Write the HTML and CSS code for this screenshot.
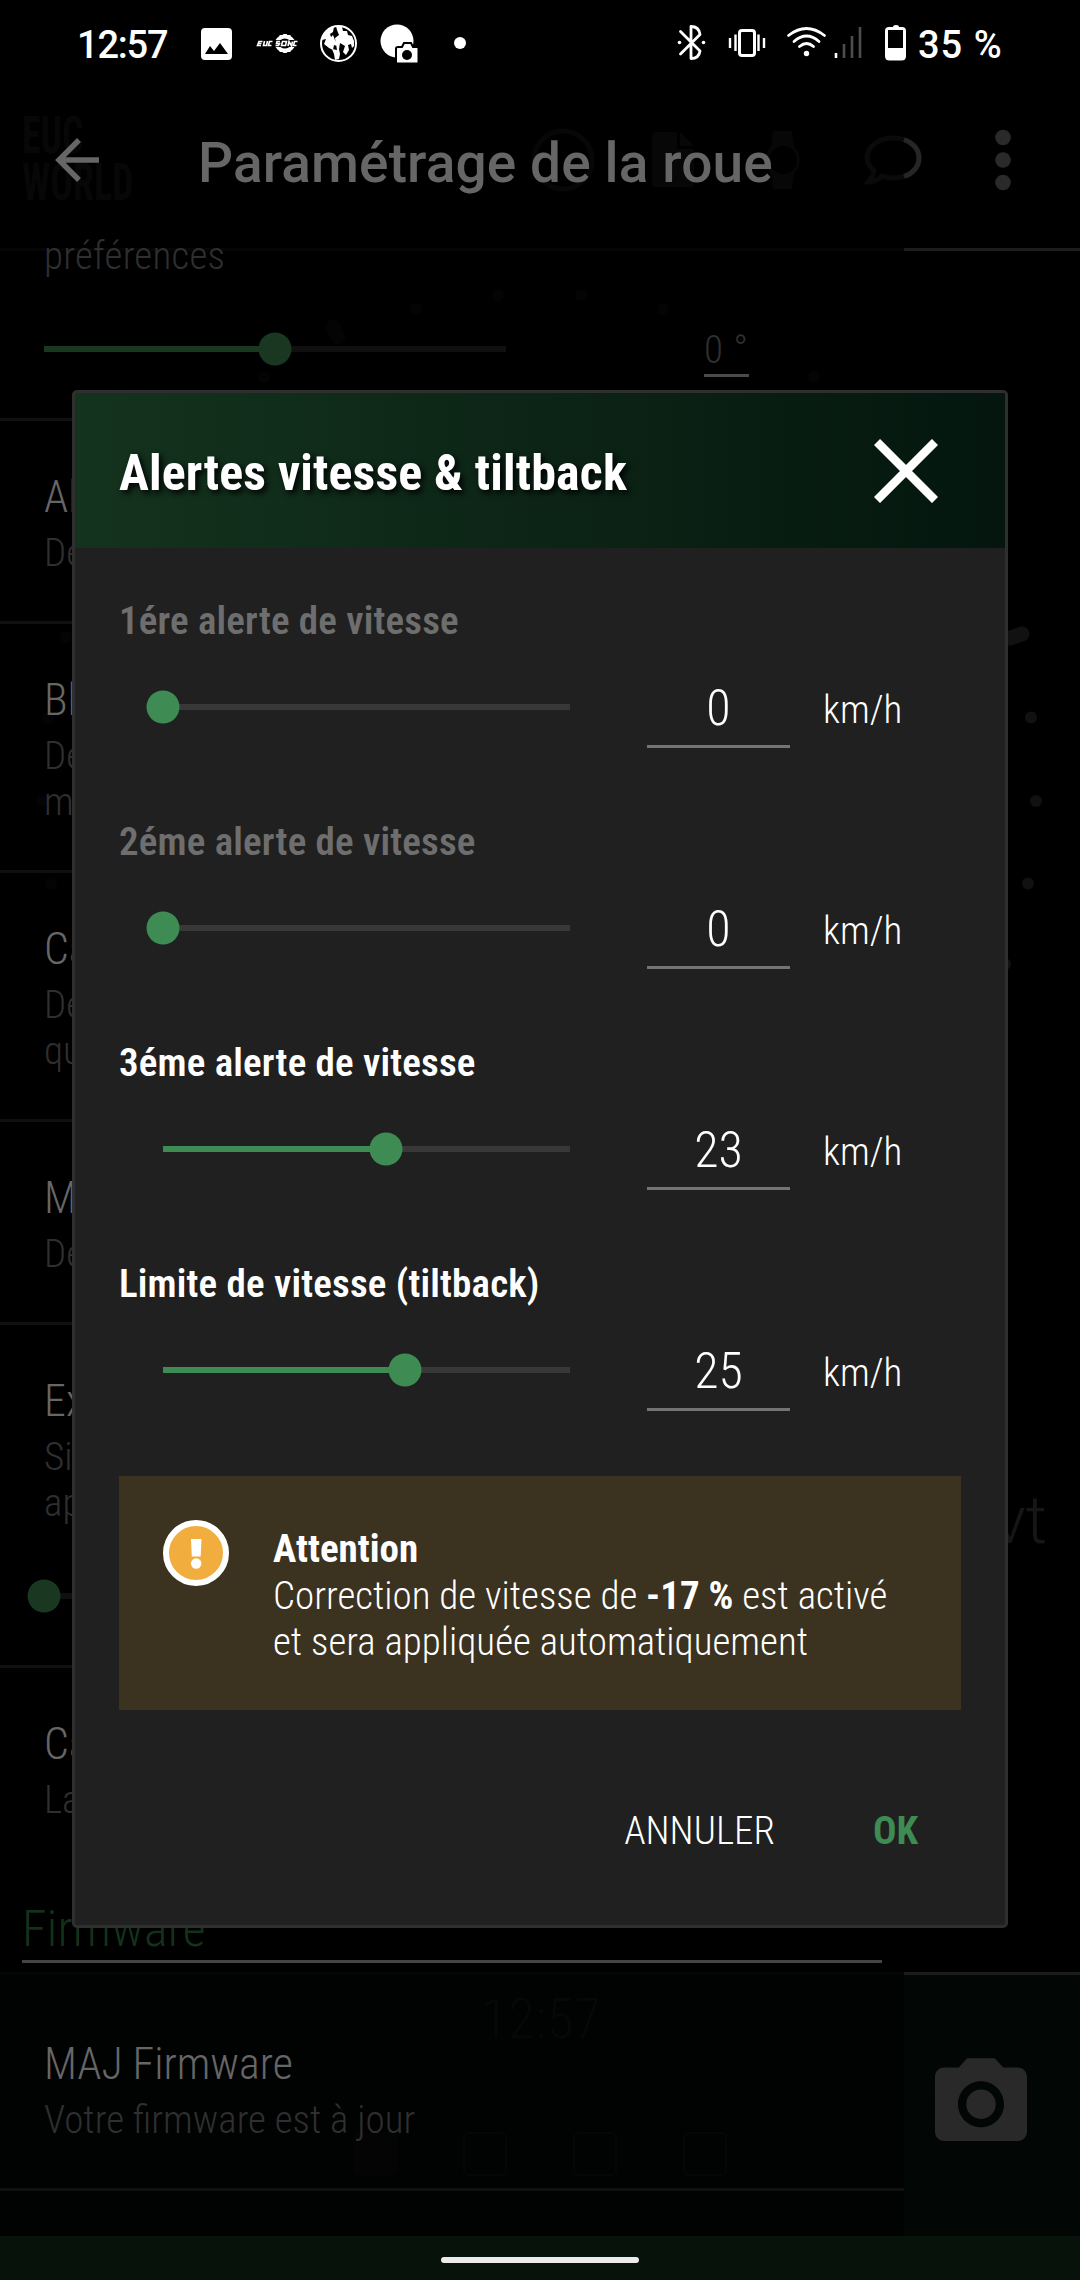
FILE: index.html
```html
<!DOCTYPE html>
<html lang="fr">
<head>
<meta charset="utf-8">
<title>Paramétrage de la roue</title>
<link rel="stylesheet" href="styles.css">
</head>
<body>
<div class="screen">

  <!-- dashboard, dimmed behind the drawer -->
  <div class="dashboard">
    <svg class="dash-art" viewBox="0 0 1080 2280">
      <g fill="none" stroke="#070707" stroke-width="5">
        <circle cx="563" cy="160" r="29"/>
      </g>
      <g fill="#070707">
        <path d="M655 132h22v17h17v35q0 3-3 3h-36q-3 0-3-3v-49q0-3 3-3zM680 132l14 14h-14z"/>
        <path fill-rule="evenodd" d="M773 131h19l2 15a20 20 0 0 1 0 28l-2 15h-19l-2-15a20 20 0 0 1 0-28zM783 146a14 14 0 1 0 .01 0z"/>
      </g>
      <path d="M893 138c15 0 26 9 26 20s-11 20-26 20c-4 0-8-.7-11-2-4 4-8 6-14 6 4-5 6-7 6-11-4-4-7-8-7-13 0-11 11-20 26-20z" fill="none" stroke="#0a0a0a" stroke-width="5"/>
      <path d="M904 139.500c9 3 15 10 15 18.500s-6 15.500-15 18.500" fill="none" stroke="#262626" stroke-width="5"/>
      <g fill="#2a2a2a"><circle cx="1003" cy="137.500" r="7.800"/><circle cx="1003" cy="160" r="7.800"/><circle cx="1003" cy="182.500" r="7.800"/></g>
      <g fill="#040404">
        <circle cx="264" cy="377" r="6"/><circle cx="416" cy="309" r="6"/><circle cx="498" cy="295" r="6"/><circle cx="581" cy="295" r="6"/><circle cx="663" cy="309" r="6"/><circle cx="814" cy="377" r="6"/>
        <circle cx="66" cy="637" r="6"/><circle cx="48" cy="718" r="6"/><circle cx="42" cy="801" r="6"/><circle cx="51" cy="884" r="6"/>
      </g>
      <path d="M333 327l5 10" stroke="#040404" stroke-width="15" stroke-linecap="round"/>
      <path d="M1010 638l12-4" stroke="#111" stroke-width="15" stroke-linecap="round"/>
      <g fill="#111"><circle cx="1031" cy="717.500" r="6"/><circle cx="1036" cy="801" r="6"/><circle cx="1028" cy="883.500" r="6"/><circle cx="1005" cy="964" r="6"/></g>
      <rect x="0" y="248" width="904" height="3" fill="#060606"/>
      <rect x="904" y="248" width="176" height="3" fill="#1c1c1c"/>
      <rect x="0" y="1972" width="904" height="264" fill="#010202"/>
      <rect x="0" y="1972" width="904" height="3" fill="#050505"/>
      <rect x="904" y="1972" width="176" height="264" fill="#020706"/>
      <rect x="904" y="1972" width="176" height="3" fill="#1c1c1c"/>
      <rect x="353" y="2132" width="44" height="44" rx="6" fill="#050404"/>
      <g fill="none" stroke="#060606" stroke-width="2"><rect x="464" y="2133" width="42" height="42" rx="5"/><rect x="574" y="2133" width="42" height="42" rx="5"/><rect x="684" y="2133" width="42" height="42" rx="5"/></g>
      <g transform="translate(925.800 2049) scale(4.600)" fill="#292929"><circle cx="12" cy="12" r="3.200"/><path d="M9 2L7.170 4H4c-1.100 0-2 .9-2 2v12c0 1.100.9 2 2 2h16c1.100 0 2-.9 2-2V6c0-1.100-.9-2-2-2h-3.170L15 2H9zm3 15c-2.760 0-5-2.240-5-5s2.240-5 5-5 5 2.240 5 5-2.240 5-5 5z"/></g>
    </svg>
    <div class="dash-logo">EUC<br>WORLD</div>
    <div class="dash-volt">vt</div>
    <div class="dash-clock">12:57</div>
  </div>

  <header class="status">
    <span class="status-time">12:57</span>
    <svg class="status-icons" viewBox="180 0 738 88" width="738" height="88">
      <path fill="#fff" fill-rule="evenodd" d="M205 28h23q4 0 4 4v24q0 4-4 4h-23q-4 0-4-4V32q0-4 4-4zM205 54h23l-8-11-6 8-4-5z"/>
      <path fill="#fff" d="M275.500 40q2-3 4-4v-1h3l1-1h3l1 1h3v1q2 1 4 4h-5q-5-3-9 0zM275.500 47h5q4 3 9 0h5q-2 3-4 4v1h-3l-1 1h-3l-1-1h-3v-1q-2-1-4-4z"/>
      <g fill="none" stroke="#fff" stroke-width="1.600"><path d="M262.500 41.500h-3.500l-1.500 4h3.500M258.500 43.500h3M264.500 41l-1 4.500h3l1-4.500M272.500 41.500h-3l-1 4h3M280 41.500h-3l-.5 2h3l-1 2h-3M282.500 41.500h4l-1 4h-4zM288 46l1-4.500 2.500 4.500 1-4.500M297.500 41.500h-3l-1 4h3"/></g>
      <circle cx="338.500" cy="43.500" r="17.500" fill="none" stroke="#fff" stroke-width="2"/>
      <path fill="#fff" d="M328 29l6-2-1 5-3 2 1 3 2-2 2 5 2 6-3-1-1 5-4-2-5-4 2-5-4 1 1-5zM336 26l6 1 1 4 4 0 1 4 4 1 2 5 0 5-2 2-1-4-3 1 1 5-3 5-3-3 2-6-5-3 -1 6 1 5-1 5-4 1-1-6-2-5 5 1-1-6-1-6 4-3-2-5z"/>
      <circle cx="397" cy="41" r="16.500" fill="#fff"/>
      <path d="M398 47h4l2-4h7l2 4h4q1.500 0 1.500 1.500v13.500q0 1.500-1.500 1.500h-19q-2 0-2-1.500v-13.500q0-1.500 2-1.500z" fill="#fff" stroke="#000" stroke-width="2"/>
      <circle cx="407" cy="55" r="5" fill="#000"/>
      <circle cx="460" cy="43" r="6" fill="#fff"/>
      <path d="M680.500 31.500L700 51q-1 7.500-9 7.500V26.500q8 0 9 8L680.500 54" fill="none" stroke="#fff" stroke-width="2.800" stroke-linejoin="round" stroke-linecap="round"/>
      <circle cx="679.500" cy="42.500" r="1.800" fill="#fff"/><circle cx="703.500" cy="42.500" r="1.800" fill="#fff"/>
      <rect x="739.500" y="30.500" width="15" height="25" rx="2.500" fill="none" stroke="#fff" stroke-width="3"/>
      <path d="M730 38v10M735.500 34.500v16.500M758.500 34.500v16.500M764 38v10" stroke="#fff" stroke-width="2.400"/>
      <g fill="none" stroke="#fff" stroke-width="2.800" stroke-linecap="round"><path d="M788.500 35.500q18-14 36 0M794 41.500q12.500-11 25 0M799.500 46.500q7-6 14 0"/></g>
      <circle cx="806.500" cy="53.500" r="2.700" fill="#fff"/>
      <path d="M836 53v5" stroke="#fff" stroke-width="2.600"/>
      <path d="M844 44v14M852 36v22M860 27v31" stroke="#4d4d4d" stroke-width="2.600"/>
      <path fill="#fff" fill-rule="evenodd" d="M893 27q0-2 3-2t3 2h3q4 0 4 4v25q0 4.500-4.500 4.500h-12q-4.500 0-4.500-4.500V31q0-4 4-4zM888 30v18h15V30z"/>
    </svg>
    <span class="status-battery">35 %</span>
  </header>

  <section class="drawer">
    <div class="toolbar">
      <svg class="back" viewBox="0 0 44 44" width="44" height="44"><path d="M44 22H4M24 2L4 22l20 20" fill="none" stroke="#666" stroke-width="5.500"/></svg>
      <h1 class="toolbar-title">Paramétrage de la roue</h1>
    </div>
    <div class="list">
      <div class="pref pref-first">
        <p class="pref-sub">préférences</p>
        <div class="pref-control">
          <div class="slider slider-dim"><span class="fill" style="width:50%"></span><span class="thumb" style="left:50%"></span></div>
          <span class="pref-value">0 °</span>
        </div>
      </div>
      <div class="pref"><p class="pref-title">Al</p><p class="pref-sub">Dé</p></div>
      <div class="pref"><p class="pref-title">Bl</p><p class="pref-sub">Dé<br>m</p></div>
      <div class="pref"><p class="pref-title">Ca</p><p class="pref-sub">Dé<br>qu</p></div>
      <div class="pref"><p class="pref-title">M</p><p class="pref-sub">Dé</p></div>
      <div class="pref pref-tall">
        <p class="pref-title">Ex</p><p class="pref-sub">Si<br>ap</p>
        <div class="slider slider-dim"><span class="fill" style="width:0%"></span><span class="thumb" style="left:0%"></span></div>
      </div>
      <div class="pref pref-last"><p class="pref-title">Ca</p><p class="pref-sub">La</p></div>
      <h2 class="group">Firmware</h2>
      <div class="pref"><p class="pref-title">MAJ Firmware</p><p class="pref-sub">Votre firmware est à jour</p></div>
    </div>
  </section>

  <div class="navbar"><span class="navpill"></span></div>

  <div class="dialog">
    <div class="dialog-head">
      <h2 class="dialog-title">Alertes vitesse &amp; tiltback</h2>
      <svg viewBox="0 0 64 64" width="64" height="64"><path d="M3 3l58 58M61 3L3 61" stroke="#fff" stroke-width="8.600"/></svg>
    </div>
    <div class="dialog-body">
      <div class="alert-row">
        <p class="label off">1ére alerte de vitesse</p>
        <div class="control"><div class="slider"><span class="fill" style="width:0%"></span><span class="thumb" style="left:0%"></span></div><span class="value">0</span><span class="unit">km/h</span></div>
      </div>
      <div class="alert-row">
        <p class="label off">2éme alerte de vitesse</p>
        <div class="control"><div class="slider"><span class="fill" style="width:0%"></span><span class="thumb" style="left:0%"></span></div><span class="value">0</span><span class="unit">km/h</span></div>
      </div>
      <div class="alert-row">
        <p class="label">3éme alerte de vitesse</p>
        <div class="control"><div class="slider"><span class="fill" style="width:54.800%"></span><span class="thumb" style="left:54.800%"></span></div><span class="value">23</span><span class="unit">km/h</span></div>
      </div>
      <div class="alert-row">
        <p class="label">Limite de vitesse (tiltback)</p>
        <div class="control"><div class="slider"><span class="fill" style="width:59.500%"></span><span class="thumb" style="left:59.500%"></span></div><span class="value">25</span><span class="unit">km/h</span></div>
      </div>
      <div class="warning">
        <svg viewBox="0 0 66 66" width="66" height="66"><circle cx="33" cy="33" r="30" fill="#f2ad3f" stroke="#fff" stroke-width="6"/><path d="M28 19h10.500l-.8 17.500h-8.900z" fill="#fff"/><circle cx="33.200" cy="43.500" r="5.200" fill="#fff"/></svg>
        <p><b>Attention</b><br>Correction de vitesse de <b>-17 %</b> est activé<br>et sera appliquée automatiquement</p>
      </div>
      <div class="actions"><span>ANNULER</span><b>OK</b></div>
    </div>
  </div>
</div>
</body>
</html>
```
FILE: styles.css
```css
* { box-sizing: border-box; }
body { margin: 0; background: #000; }
h1, h2, p { margin: 0; font-weight: inherit; }

.screen {
  position: relative;
  width: 1080px;
  height: 2280px;
  overflow: hidden;
  display: flex;
  flex-direction: column;
  background: #000;
  color: #fff;
  font-family: "Roboto Condensed", Roboto, sans-serif;
  font-stretch: 75%;
  font-weight: 300;
  font-size: 39px;
  white-space: nowrap;
}
svg { display: block; flex: none; }

/* dashboard layer */
.dashboard { position: absolute; inset: 0; }
.dash-art { width: 1080px; height: 2280px; }
.dash-logo {
  position: absolute; left: 22px; top: 112px;
  transform: scaleX(.74); transform-origin: 0 0;
  font-size: 51px; line-height: 47px; font-weight: 700; color: #070707;
}
.dash-volt {
  position: absolute; right: 33px; top: 1483px;
  font-size: 66px; line-height: 76px; font-stretch: 100%; font-family: Roboto, sans-serif; color: #161616;
}
.dash-clock { position: absolute; left: 481px; top: 1986px; font-size: 55px; line-height: 66px; letter-spacing: .4px; color: #070707; }

/* status bar */
.status {
  position: relative;
  display: flex;
  align-items: center;
  height: 88px;
  padding-left: 77px;
  font-family: Roboto, sans-serif;
  font-stretch: 100%;
  font-weight: 500;
  font-size: 38px;
  line-height: 88px;
}
.status-time { width: 103px; padding-top: 2px; letter-spacing: -1.2px; }
.status-battery { padding-top: 2px; letter-spacing: 1px; }

/* drawer */
.drawer { position: relative; flex: 1; display: flex; flex-direction: column; width: 904px; }
.toolbar { display: flex; align-items: center; height: 145px; padding: 0 0 1px 55px; }
.toolbar-title {
  margin-left: 99px; padding-top: 6px;
  font-family: Roboto, sans-serif; font-stretch: 100%;
  font-weight: 500; font-size: 55px; line-height: 64px; letter-spacing: .12px; color: #666;
}
.pref { padding: 49px 22px 45px 44px; border-bottom: 3px solid #101010; }
.pref-first { padding: 0 0 0 44px; }
.pref-title { font-size: 44px; line-height: 54px; color: #666; }
.pref-sub { margin-top: 6px; line-height: 46px; color: #2f2f2f; }
.pref-first .pref-sub { margin-top: 0; letter-spacing: .25px; }
.pref-control { display: flex; align-items: center; height: 139px; }
.pref-control .slider { width: 462px; }
.pref-value {
  margin-left: 198px; padding: 3px 0 0; width: 45px; height: 57px;
  border-bottom: 3px solid #4a4a4a; line-height: 54px; letter-spacing: .8px; color: #2f2f2f;
}
.pref-tall .slider { margin-top: 67px; margin-bottom: 21px; width: 620px; }
.pref-last { border-bottom: 0; }
.group {
  margin: 31px 22px 25px; padding-bottom: 1px;
  border-bottom: 3px solid #444;
  font-size: 50px; line-height: 60px; letter-spacing: .2px; color: #12321c;
}

/* sliders */
.slider { position: relative; flex: none; height: 6px; width: 407px; background: #383838; color: #3e8b53; }
.slider-dim { background: #101010; color: #1a3722; }
.fill { display: block; height: 6px; background: currentColor; }
.thumb {
  position: absolute; top: 50%;
  width: 33px; height: 33px; border-radius: 50%;
  transform: translate(-50%, -50%);
  background: currentColor;
}

/* navigation bar */
.navbar { position: relative; display: flex; justify-content: center; height: 44px; padding-top: 21px; background: #06120a; }
.navpill { width: 198px; height: 6px; border-radius: 3px; background: #ebebeb; }

/* dialog */
.dialog {
  position: absolute; left: 72px; top: 390px;
  width: 936px; height: 1538px;
  border: 3px solid #2f2f2f; border-radius: 5px;
  background: #202020;
}
.dialog-head {
  display: flex; justify-content: space-between; align-items: center;
  height: 155px; padding: 0 67px 0 44px;
  background: linear-gradient(90deg, #14331e, #04160e);
}
.dialog-title { padding-top: 4px; font-size: 50px; line-height: 60px; font-weight: 700; letter-spacing: .14px; text-shadow: 3px 3px 6px #000; }
.dialog-body { padding: 50px 44px 0; }
.alert-row { height: 221px; }
.label { line-height: 46px; font-weight: 600; letter-spacing: .17px; }
.off { color: #6e6e6e; }
.control { display: flex; align-items: center; height: 126px; padding-left: 44px; }
.value {
  margin-left: 77px; width: 143px; height: 81px; padding-top: 4px;
  border-bottom: 3px solid #747474;
  font-size: 50px; line-height: 74px; text-align: center;
}
.unit { margin-left: 33px; padding-top: 5px; line-height: 46px; }
.warning {
  display: flex; height: 234px; margin-top: -6px; padding: 44px;
  background: #3b3220;
}
.warning p { margin-left: 44px; padding-top: 6px; line-height: 46.500px; }
.warning b { font-weight: 700; }
.actions { display: flex; justify-content: flex-end; margin-top: 98px; padding-right: 43px; gap: 98px; line-height: 46px; }
.actions b { font-weight: 700; color: #3e8b53; }
```
